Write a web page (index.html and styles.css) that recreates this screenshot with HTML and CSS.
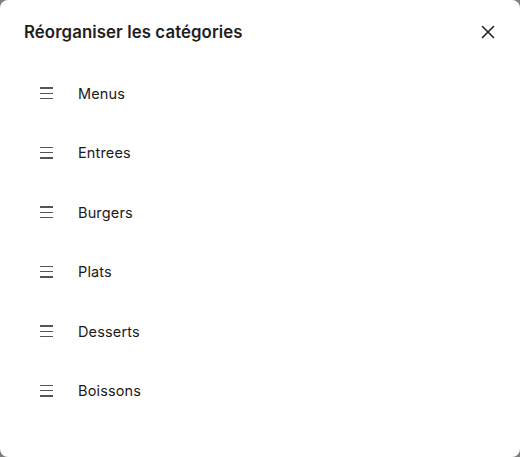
FILE: index.html
```html
<!DOCTYPE html>
<html lang="fr">
<head>
<meta charset="utf-8">
<title>Réorganiser les catégories</title>
<link rel="stylesheet" href="styles.css">
</head>
<body>
<div class="modal">
  <div class="header">
    <h1 class="title">Réorganiser les catégories</h1>
    <button class="close" aria-label="Fermer">
      <svg width="14" height="14" viewBox="0 0 14 14"><path d="M1.5 1.5 L12.5 12.5 M12.5 1.5 L1.5 12.5" stroke="#222" stroke-width="1.6" stroke-linecap="round"/></svg>
    </button>
  </div>
  <ul class="list">
    <li class="row"><span class="handle"><i></i><i></i><i></i></span><span class="label">Menus</span></li>
    <li class="row"><span class="handle"><i></i><i></i><i></i></span><span class="label">Entrees</span></li>
    <li class="row"><span class="handle"><i></i><i></i><i></i></span><span class="label">Burgers</span></li>
    <li class="row"><span class="handle"><i></i><i></i><i></i></span><span class="label">Plats</span></li>
    <li class="row"><span class="handle"><i></i><i></i><i></i></span><span class="label">Desserts</span></li>
    <li class="row"><span class="handle"><i></i><i></i><i></i></span><span class="label">Boissons</span></li>
  </ul>
</div>
</body>
</html>
```
FILE: styles.css
```css
* { box-sizing: border-box; }
html, body { margin: 0; padding: 0; }
body {
  background: #7d7d7d;
  width: 520px;
  height: 457px;
  font-family: Inter, "Noto Sans", sans-serif;
  color: #1f1f1f;
}
.modal {
  width: 520px;
  height: 457px;
  background: #fff;
  border-radius: 8px;
  overflow: hidden;
}
.header {
  display: flex;
  align-items: center;
  justify-content: space-between;
  height: 64px;
  padding: 0 25px 0 24px;
}
.title {
  margin: 0;
  font-size: 16.8px;
  font-weight: 600;
  letter-spacing: 0.1px;
  color: #1e1e1e;
}
.close {
  border: 0;
  background: none;
  padding: 0;
  width: 14px;
  height: 14px;
  display: flex;
}
.list {
  list-style: none;
  margin: 0;
  padding: 0;
  display: flex;
  flex-direction: column;
}
.row {
  height: 59.5px;
  display: flex;
  align-items: center;
  padding-left: 40px;
}
.row:first-child { margin-top: -0.5px; }
.handle {
  width: 13px;
  display: flex;
  flex-direction: column;
  gap: 4px;
  margin-right: 25px;
}
.handle i {
  display: block;
  height: 1.2px;
  background: #555;
}
.label {
  font-size: 14.5px;
  font-weight: 400;
  letter-spacing: 0.15px;
  color: #1a1a1a;
}
```
